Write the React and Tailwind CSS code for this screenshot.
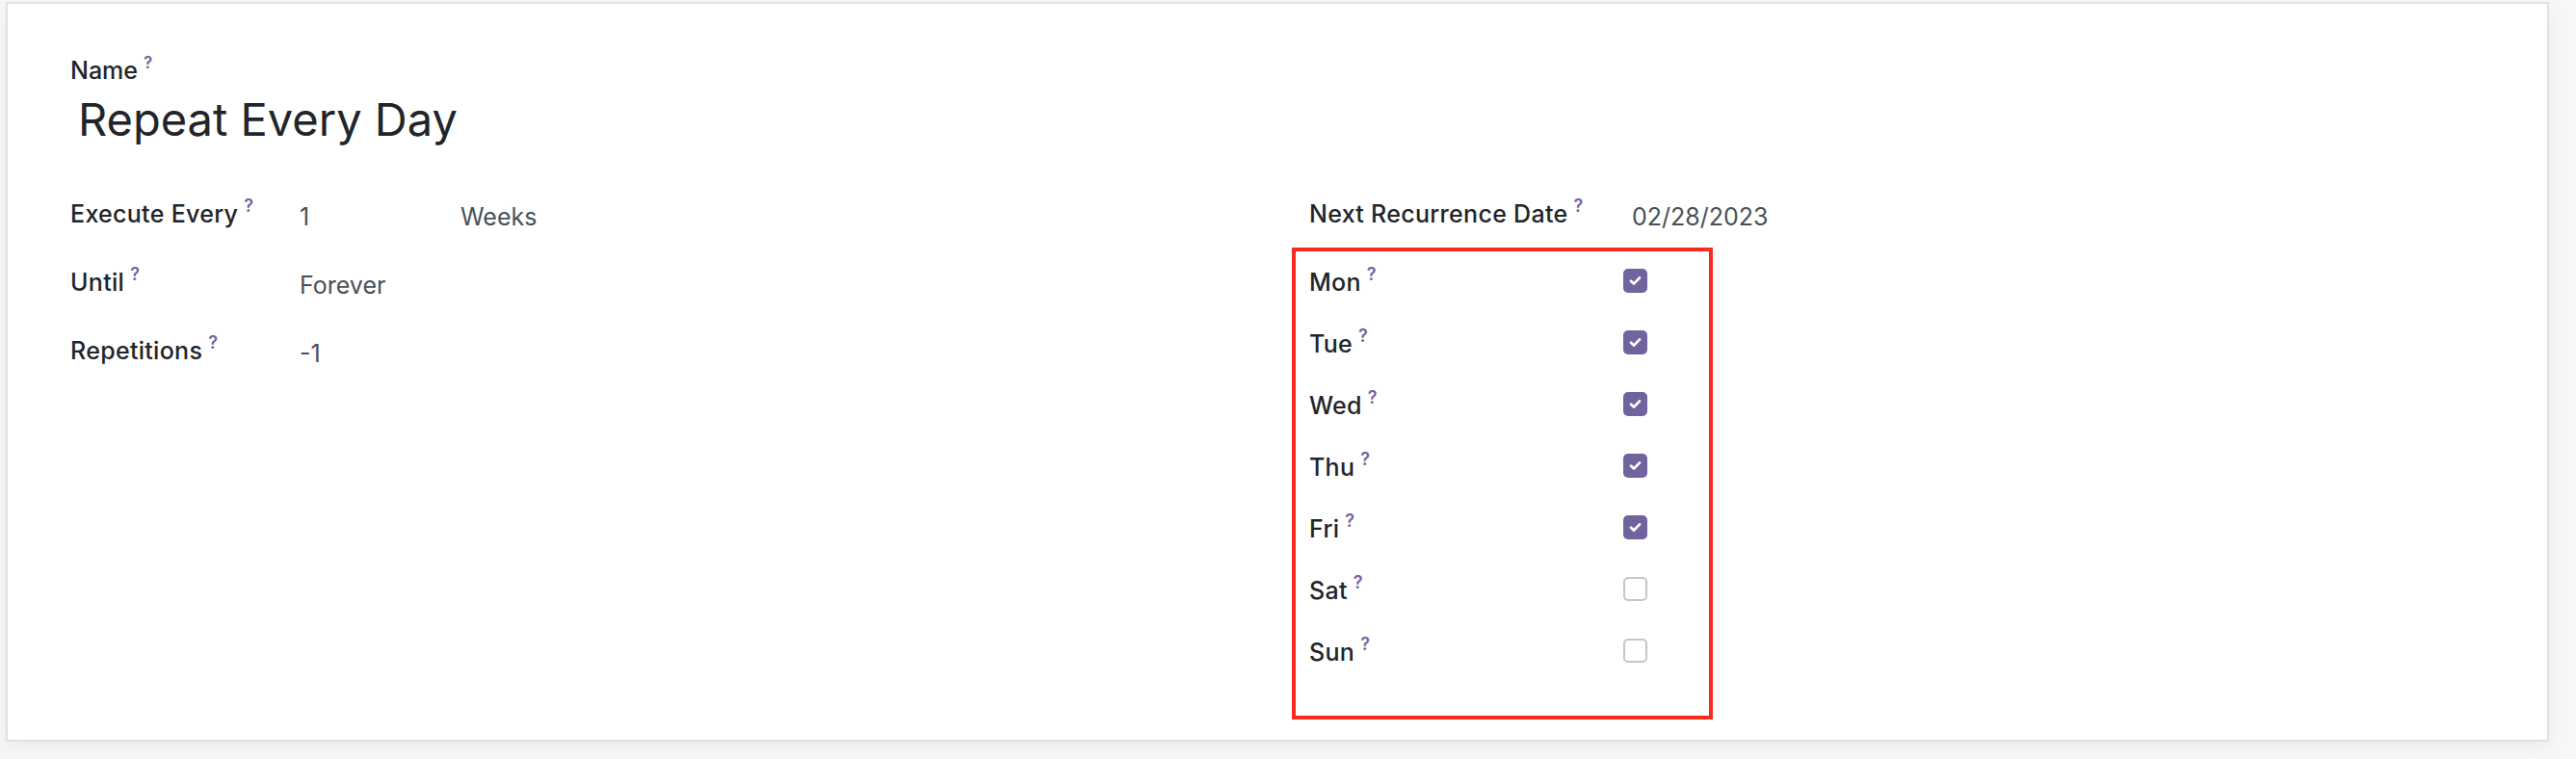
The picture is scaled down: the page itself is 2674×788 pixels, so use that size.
import React from "react";

const days = [
  { name: "Mon", on: true },
  { name: "Tue", on: true },
  { name: "Wed", on: true },
  { name: "Thu", on: true },
  { name: "Fri", on: true },
  { name: "Sat", on: false },
  { name: "Sun", on: false },
];

function Help() {
  return (
    <sup className="ml-[6px] text-[18px] font-semibold text-[#71639e] -top-[11px]">?</sup>
  );
}

function Label({ children }) {
  return (
    <span className="text-[25px] leading-[36px] font-medium tracking-[0.3px] text-[#212529]">
      {children}
      <Help />
    </span>
  );
}

function Value({ children, className = "" }) {
  return (
    <span className={`pt-[3px] text-[25px] leading-[36px] text-[#495057] ${className}`}>
      {children}
    </span>
  );
}

function Checkbox({ on }) {
  if (!on) {
    return (
      <div className="mt-[4px] w-[25px] h-[25px] rounded-[5px] border-2 border-[#c4c6c9] bg-white" />
    );
  }
  return (
    <div className="mt-[4px] w-[25px] h-[25px] rounded-[5px] bg-[#71639e] flex items-center justify-center">
      <svg width="13" height="11" viewBox="0 0 13 11" fill="none">
        <path d="M2 5.8 L5 8.6 L11 2.4" stroke="white" strokeWidth="2.8" strokeLinecap="round" strokeLinejoin="round" />
      </svg>
    </div>
  );
}

export default function App() {
  return (
    <div className="w-[2674px] h-[788px] bg-[#f6f7f9] pt-[2px] pl-[6px] pr-[28px] font-['Inter',sans-serif]">
      <div className="h-[768px] border-2 border-[#dfe1e5] bg-white shadow-[0_6px_18px_rgba(0,0,0,0.05)] pl-[65px] pt-[53px]">
        <div className="h-[32px] flex">
          <span className="text-[25px] leading-[32px] font-medium text-[#212529]">
            Name
            <sup className="ml-[6px] text-[17px] font-semibold text-[#71639e] -top-[11px]">?</sup>
          </span>
        </div>
        <div className="mt-[9px] h-[52px] pl-[8px] text-[47px] leading-[52px] text-[#212529]">
          Repeat Every Day
        </div>

        <div className="mt-[54px] grid grid-cols-[1268px_1fr]">
          <div>
            <div className="h-[71px] flex items-start">
              <div className="w-[238px]"><Label>Execute Every</Label></div>
              <Value className="w-[167px]">1</Value>
              <Value>Weeks</Value>
            </div>
            <div className="h-[71px] flex items-start">
              <div className="w-[238px]"><Label>Until</Label></div>
              <Value>Forever</Value>
            </div>
            <div className="h-[71px] flex items-start">
              <div className="w-[238px]"><Label>Repetitions</Label></div>
              <Value>-1</Value>
            </div>
          </div>

          <div>
            <div className="h-[53px] pl-[18px] flex items-start">
              <div className="w-[335px]"><Label>Next Recurrence Date</Label></div>
              <Value>02/28/2023</Value>
            </div>
            <div className="w-[437px] border-4 border-[#fb2a1e] pl-[14px] pt-[14px] pb-[20px]">
              {days.map((d) => (
                <div key={d.name} className="h-[64px] flex items-start">
                  <div className="w-[326px]"><Label>{d.name}</Label></div>
                  <Checkbox on={d.on} />
                </div>
              ))}
            </div>
          </div>
        </div>
      </div>
    </div>
  );
}
